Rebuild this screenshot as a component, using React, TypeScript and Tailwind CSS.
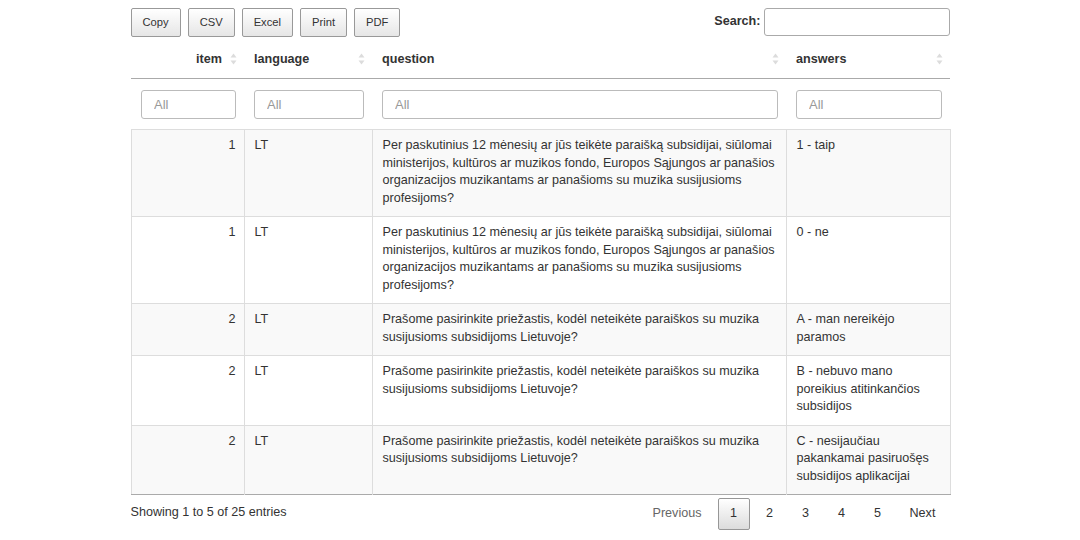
import React from 'react';

type Row = {
    item: number;
    language: string;
    question: string;
    answer: string;
};

const Q1 =
    'Per paskutinius 12 mėnesių ar jūs teikėte paraišką subsidijai, siūlomai ministerijos, kultūros ar muzikos fondo, Europos Sąjungos ar panašios organizacijos muzikantams ar panašioms su muzika susijusioms profesijoms?';
const Q2 = 'Prašome pasirinkite priežastis, kodėl neteikėte paraiškos su muzika susijusioms subsidijoms Lietuvoje?';

const rows: Row[] = [
    { item: 1, language: 'LT', question: Q1, answer: '1 - taip' },
    { item: 1, language: 'LT', question: Q1, answer: '0 - ne' },
    { item: 2, language: 'LT', question: Q2, answer: 'A - man nereikėjo paramos' },
    { item: 2, language: 'LT', question: Q2, answer: 'B - nebuvo mano poreikius atitinkančios subsidijos' },
    { item: 2, language: 'LT', question: Q2, answer: 'C - nesijaučiau pakankamai pasiruošęs subsidijos aplikacijai' },
];

const SortIcon = () => (
    <svg width="7" height="13" viewBox="0 0 7 13" className="absolute right-[7px] top-1/2 -translate-y-1/2">
        <path d="M3.5 1 L6.5 5 L0.5 5 Z" fill="#dcdcdc" />
        <path d="M3.5 12 L6.5 8 L0.5 8 Z" fill="#dcdcdc" />
    </svg>
);

const ToolButton = ({ label }: { label: string }) => (
    <button className="h-[29px] px-[11px] text-[11.2px] text-[#333] border border-[#999] rounded-[2px] bg-gradient-to-b from-white to-[#e6e6e6]">
        {label}
    </button>
);

export default function App() {
    const headers = [
        { label: 'item', align: 'text-right' },
        { label: 'language', align: 'text-left' },
        { label: 'question', align: 'text-left' },
        { label: 'answers', align: 'text-left' },
    ];

    return (
        <div className="min-h-screen bg-white text-[#333] text-[12.6px] leading-[17.5px]" style={{ fontFamily: '"Liberation Sans", Arial, sans-serif' }}>
            <div className="mx-auto w-[819px] pt-2">
                {/* Toolbar */}
                <div className="flex justify-between items-start h-[32px]">
                    <div className="flex gap-[7px]">
                        {['Copy', 'CSV', 'Excel', 'Print', 'PDF'].map((b) => (
                            <ToolButton key={b} label={b} />
                        ))}
                    </div>
                    <label className="flex items-center font-bold">
                        Search:
                        <input className="ml-[3px] w-[186px] h-[28px] border border-[#aaa] rounded-[3px] px-1 outline-none" />
                    </label>
                </div>

                {/* Table */}
                <table className="w-full table-fixed border-collapse">
                    <colgroup>
                        <col className="w-[113px]" />
                        <col className="w-[128px]" />
                        <col className="w-[414px]" />
                        <col className="w-[164px]" />
                    </colgroup>
                    <thead>
                        <tr className="border-b border-[#aaa]">
                            {headers.map((h) => (
                                <th
                                    key={h.label}
                                    className={`relative font-bold ${h.align} py-[10px] pl-[10px] pr-[22px] leading-[18px]`}
                                >
                                    {h.label}
                                    <SortIcon />
                                </th>
                            ))}
                        </tr>
                        <tr>
                            {headers.map((h) => (
                                <th key={h.label} className="pt-[11px] pb-[10px] pl-[10px] pr-2 font-normal">
                                    <input
                                        placeholder="All"
                                        className="block w-full h-[29px] border border-[#bbb] rounded-[3px] pl-3 text-[13px] placeholder:text-[#999] outline-none"
                                    />
                                </th>
                            ))}
                        </tr>
                    </thead>
                    <tbody className="border-x border-[#ddd] border-b border-b-[#aaa]">
                        {rows.map((r, i) => (
                            <tr key={i} className={`border-t border-[#ddd] align-top ${i % 2 === 0 ? 'bg-[#f9f9f9]' : 'bg-white'}`}>
                                <td className="pl-[10px] pr-[8px] pt-[7px] pb-[9px] text-right border-r border-[#ddd]">{r.item}</td>
                                <td className="px-[10px] pt-[7px] pb-[9px] border-r border-[#ddd]">{r.language}</td>
                                <td className="px-[10px] pt-[7px] pb-[9px] border-r border-[#ddd]">{r.question}</td>
                                <td className="px-[10px] pt-[7px] pb-[9px]">{r.answer}</td>
                            </tr>
                        ))}
                    </tbody>
                </table>

                {/* Footer */}
                <div className="flex justify-between items-start pt-[3px]">
                    <div className="pt-[6px]">Showing 1 to 5 of 25 entries</div>
                    <div className="flex items-center gap-1">
                        <span className="px-3 h-[32px] flex items-center text-[#666]">Previous</span>
                        <span className="w-[32px] h-[32px] flex items-center justify-center border border-[#979797] rounded-[2px] bg-gradient-to-b from-white to-[#dcdcdc]">
                            1
                        </span>
                        {[2, 3, 4, 5].map((n) => (
                            <span key={n} className="w-[32px] h-[32px] flex items-center justify-center">
                                {n}
                            </span>
                        ))}
                        <span className="w-[52px] pl-3 h-[32px] flex items-center">Next</span>
                    </div>
                </div>
            </div>
        </div>
    );
}
